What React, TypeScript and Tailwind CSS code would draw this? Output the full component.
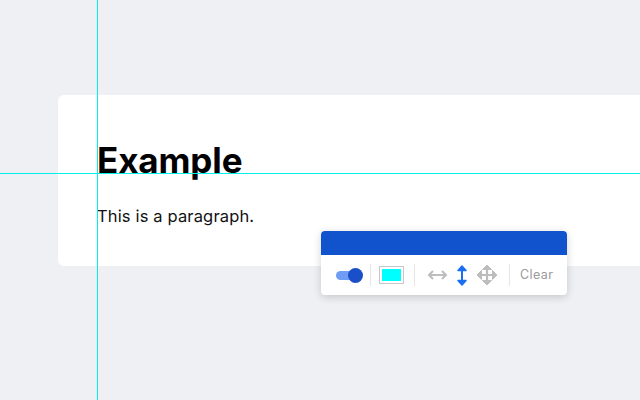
import React from "react";

export default function App() {
  return (
    <div
      className="relative w-[640px] h-[400px] overflow-hidden bg-[#eff0f4]"
      style={{ fontFamily: "Inter, 'Noto Sans', sans-serif" }}
    >
      <div className="pt-[95px] pl-[58px]">
        <div className="w-[620px] rounded-md bg-white pl-[39px] pt-[45px] pb-[38px]">
          <h1 className="text-[35px] leading-[40px] font-bold text-black tracking-[-0.1px]">Example</h1>
          <p className="mt-[24px] text-[16.5px] leading-[24px] text-[#111] tracking-[0.15px]">This is a paragraph.</p>
        </div>
      </div>

      {/* crosshair guides */}
      <div className="absolute left-[97px] top-0 h-[400px] w-px bg-[#00f0f0]" />
      <div className="absolute left-0 top-[173px] w-[640px] h-px bg-[#00f0f0]" />

      {/* toolbar */}
      <div className="absolute left-[321px] top-[231px] w-[246px] rounded-[4px] bg-white shadow-[0_2px_8px_rgba(0,0,0,0.18)] overflow-hidden">
        <div className="h-[24px] bg-[#1053cc]" />
        <div className="flex items-center h-[40px] pl-[15px]">
          {/* toggle */}
          <div className="relative w-[27px] h-[15px] flex items-center">
            <div className="w-[22px] h-[9px] rounded-full bg-[#6f9df6]" />
            <div className="absolute right-0 top-0 w-[15px] h-[15px] rounded-full bg-[#1a4fc9]" />
          </div>
          <div className="ml-[7px] w-px h-[22px] bg-[#e6e6e6]" />
          {/* swatch */}
          <div className="ml-[8px] w-[25px] h-[18px] border border-[#c8c8c8] p-[2px] bg-white">
            <div className="w-full h-full bg-[#00ffff]" />
          </div>
          <div className="ml-[10px] w-px h-[22px] bg-[#e6e6e6]" />
          {/* horizontal arrow */}
          <svg className="ml-[12px]" width="21" height="12" viewBox="0 0 21 12" fill="none">
            <path d="M2 6H19" stroke="#bdbdbd" strokeWidth="2" />
            <path d="M6 2L2 6L6 10" stroke="#bdbdbd" strokeWidth="2" strokeLinejoin="miter" />
            <path d="M15 2L19 6L15 10" stroke="#bdbdbd" strokeWidth="2" strokeLinejoin="miter" />
          </svg>
          {/* vertical arrow */}
          <svg className="ml-[8px]" width="12" height="23" viewBox="0 0 12 23" fill="none">
            <path d="M6 3V20" stroke="#1a6ff0" strokeWidth="2" />
            <path d="M2 6.5L6 2L10 6.5Z" fill="#1a6ff0" stroke="#1a6ff0" strokeWidth="1.5" strokeLinejoin="round" />
            <path d="M2 16.5L6 21L10 16.5Z" fill="#1a6ff0" stroke="#1a6ff0" strokeWidth="1.5" strokeLinejoin="round" />
          </svg>
          {/* move arrows */}
          <svg className="ml-[8px]" width="22" height="22" viewBox="0 0 22 22" fill="none">
            <path d="M11 3V19M3 11H19" stroke="#bdbdbd" strokeWidth="2.2" />
            <path d="M6.5 5.5L11 1L15.5 5.5Z" fill="#bdbdbd" stroke="#bdbdbd" strokeWidth="1" strokeLinejoin="round" />
            <path d="M6.5 16.5L11 21L15.5 16.5Z" fill="#bdbdbd" stroke="#bdbdbd" strokeWidth="1" strokeLinejoin="round" />
            <path d="M5.5 6.5L1 11L5.5 15.5Z" fill="#bdbdbd" stroke="#bdbdbd" strokeWidth="1" strokeLinejoin="round" />
            <path d="M16.5 6.5L21 11L16.5 15.5Z" fill="#bdbdbd" stroke="#bdbdbd" strokeWidth="1" strokeLinejoin="round" />
          </svg>
          <div className="ml-[11px] w-px h-[22px] bg-[#e6e6e6]" />
          <span className="ml-[10px] text-[12.5px] text-[#9a9a9a] tracking-[0.4px]">Clear</span>
        </div>
      </div>
    </div>
  );
}
